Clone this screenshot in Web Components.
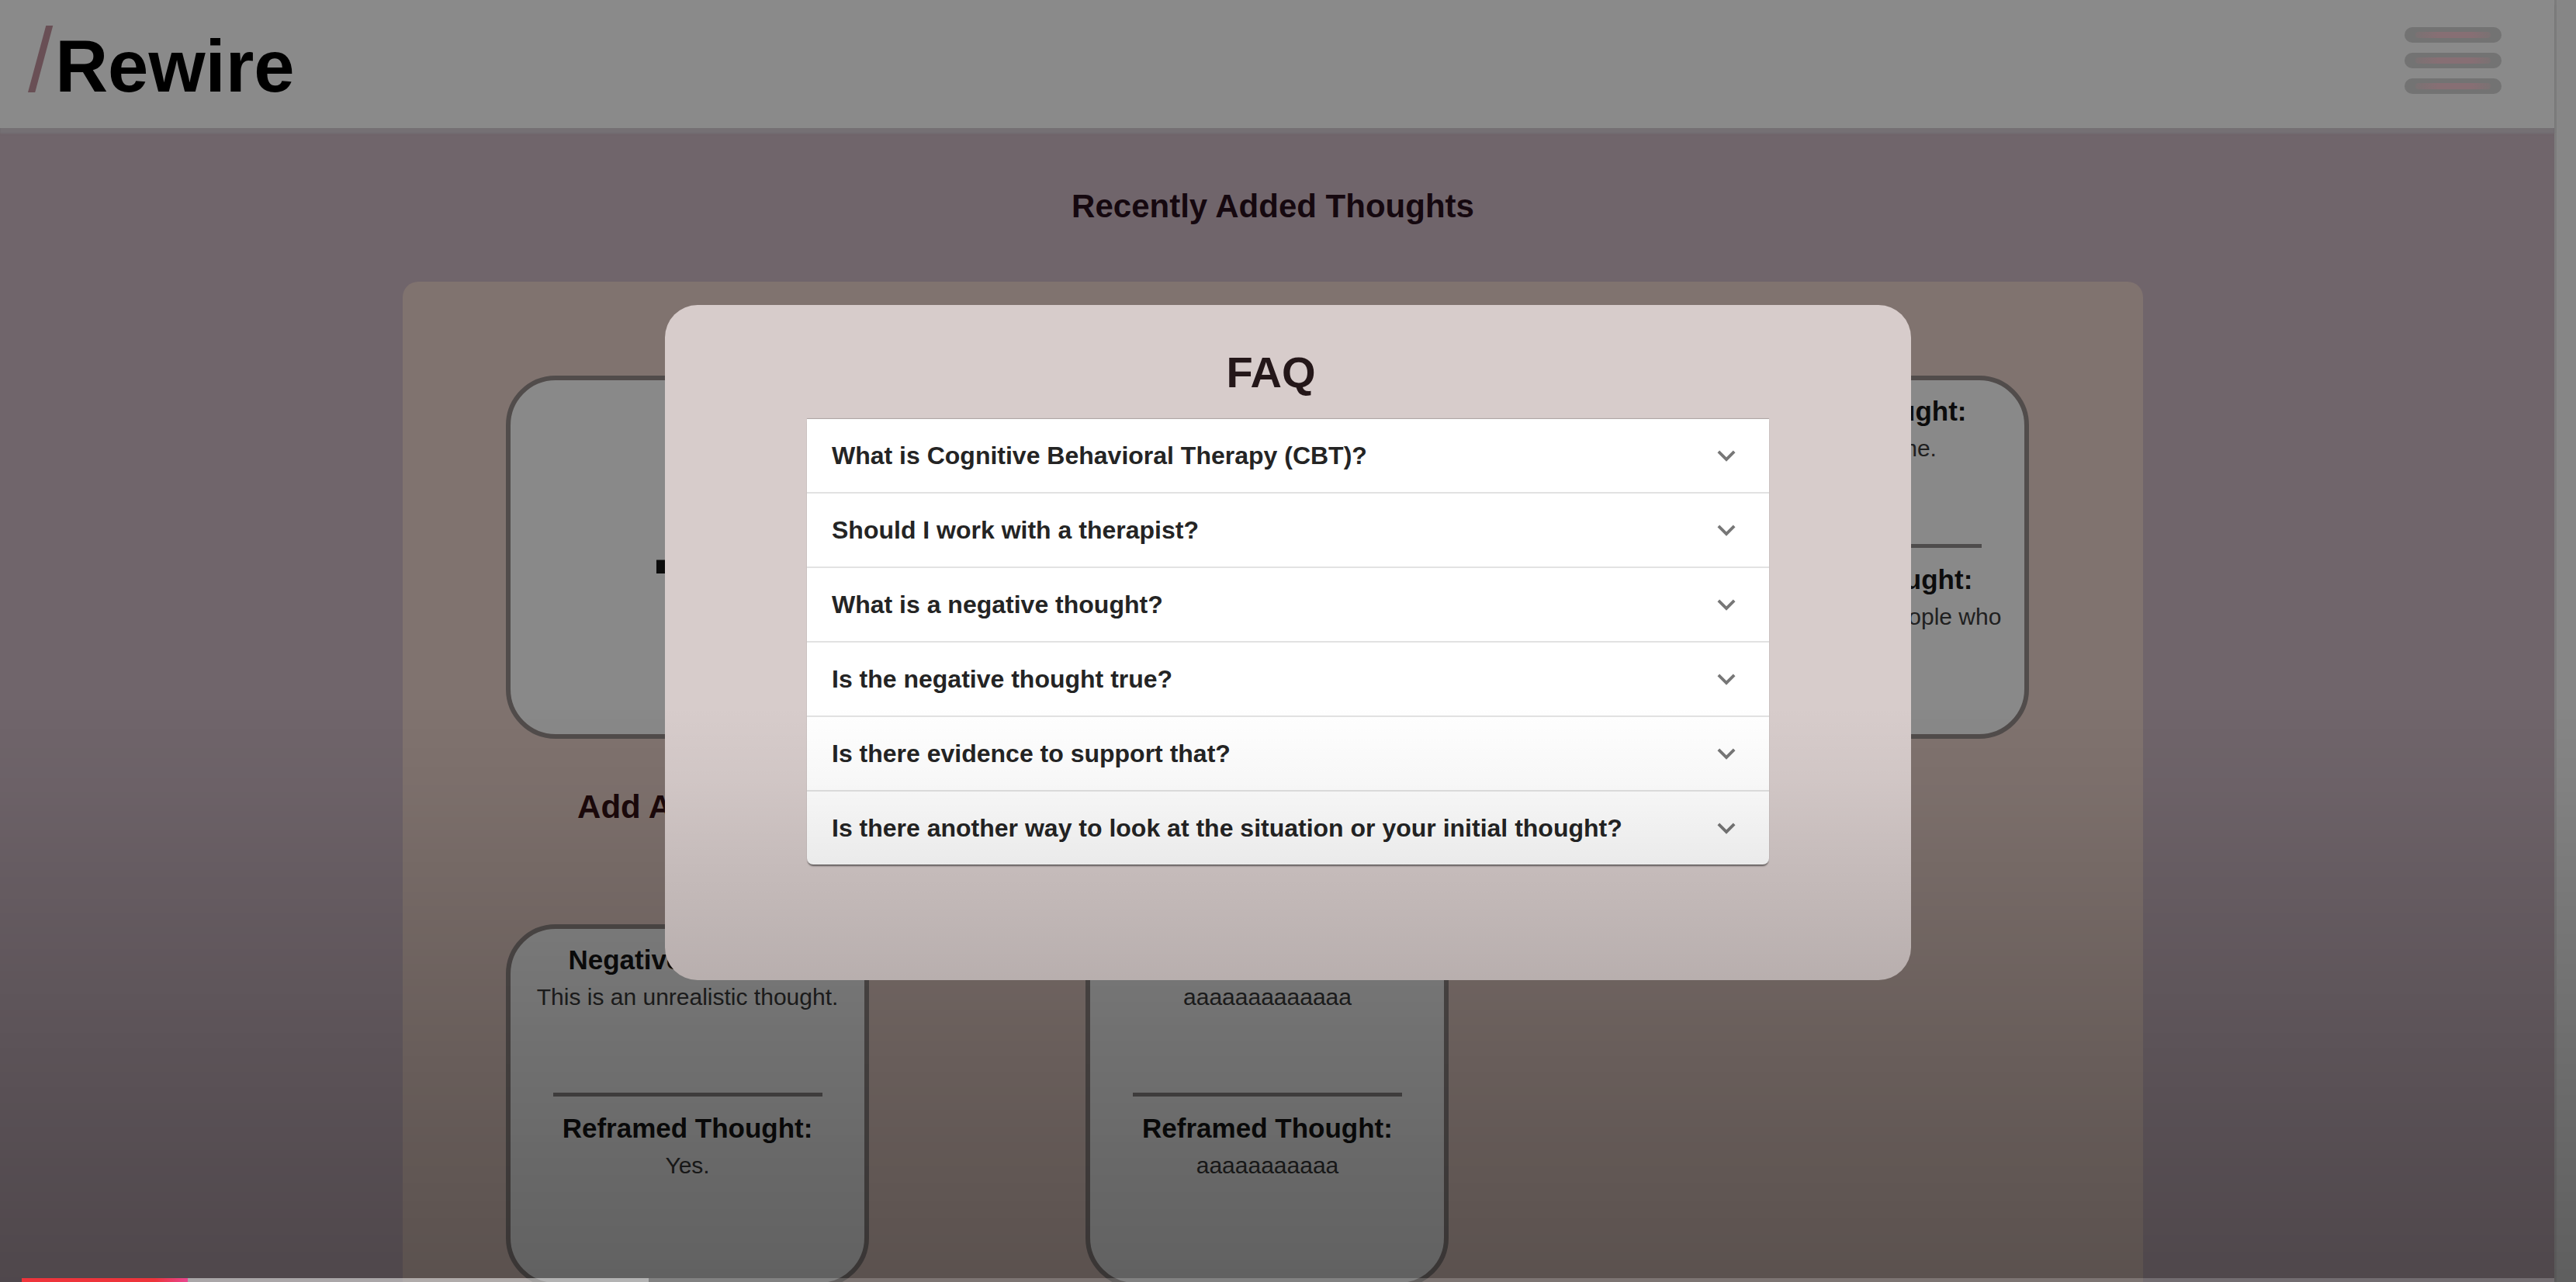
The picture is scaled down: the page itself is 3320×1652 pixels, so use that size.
<!DOCTYPE html>
<html lang="en">
<head>
<meta charset="utf-8">
<title>Rewire</title>
<style>
  html, body { margin: 0; height: 100%; overflow: hidden; background: #70656b; }
  body { font-family: "Liberation Sans", Arial, Helvetica, sans-serif; color: #0c0c0c; }
</style>
</head>
<body>
<rewire-app>
  <rewire-header></rewire-header>
  <thought-board>
    <add-card label="Add A Thought"></add-card>
    <thought-card style="grid-column: 3" negative="Nobody likes me." reframed="There are several people who love me."></thought-card>
    <thought-card negative="This is an unrealistic thought." reframed="Yes."></thought-card>
    <thought-card negative="aaaaaaaaaaaaa" reframed="aaaaaaaaaaa"></thought-card>
  </thought-board>
  <faq-modal slot="overlay">
    <faq-item>What is Cognitive Behavioral Therapy (CBT)?</faq-item>
    <faq-item>Should I work with a therapist?</faq-item>
    <faq-item>What is a negative thought?</faq-item>
    <faq-item>Is the negative thought true?</faq-item>
    <faq-item>Is there evidence to support that?</faq-item>
    <faq-item>Is there another way to look at the situation or your initial thought?</faq-item>
  </faq-modal>
  <playback-bar slot="overlay"></playback-bar>
</rewire-app>

<script>
function define(name, render) {
  customElements.define(name, class extends HTMLElement {
    constructor() {
      super();
      this.attachShadow({ mode: 'open' });
    }
    connectedCallback() {
      this.shadowRoot.innerHTML = render(this);
    }
  });
}

define('rewire-app', () => `
  <style>
    :host { display: flex; height: 100vh; overflow: hidden; }
    .page { flex: 1; min-width: 0; background: #70656b; }
    .track { flex: none; width: 28px; box-sizing: border-box; background: #868686; border-left: 3px solid #7c7c7c; }
  </style>
  <div class="page"><slot></slot></div>
  <div class="track"></div>
  <slot name="overlay"></slot>`);

define('rewire-header', () => `
  <style>
    :host { display: flex; align-items: center; justify-content: space-between; background: #8a8a8a;
            padding: 20px 68px 29px 36px; box-shadow: 0 7px 2px #757074; position: relative; }
    a { display: flex; align-items: baseline; gap: 3px; text-decoration: none; color: #000; font-size: 94px; line-height: 94px; font-weight: bold; }
    .slash { font-size: 116px; line-height: 116px; font-weight: normal; color: #694f55; }
    button { display: flex; flex-direction: column; gap: 13px; width: 125px; padding: 0; border: 0; background: none; }
    i { display: block; width: 100%; height: 20px; border-radius: 10px; background: #737373; padding: 6px 14px; box-sizing: border-box; }
    i::before { content: ""; display: block; height: 8px; border-radius: 4px;
                background: linear-gradient(90deg, #7a7273, #876f74 30%, #876f74 75%, #7a7273); }
  </style>
  <a href="#"><span class="slash">/</span><span>Rewire</span></a>
  <button type="button" aria-label="Menu"><i></i><i></i><i></i></button>`);

define('thought-board', () => `
  <style>
    :host { display: block; margin-right: 11px; padding-top: 80px; }
    h1 { margin: 0 0 76px; font-size: 42px; line-height: 42px; text-align: center; color: #15080f; }
    .panel { display: grid; grid-template-columns: repeat(3, 468px); justify-content: space-between; align-items: start;
             row-gap: 130px; width: 68.36%; box-sizing: border-box; margin: 0 auto;
             padding: 121px 147px 121px 133px; background: #80736f; border-radius: 20px; }
  </style>
  <h1>Recently Added Thoughts</h1>
  <div class="panel"><slot></slot></div>`);

define('add-card', el => `
  <style>
    :host { display: block; }
    button { display: block; width: 100%; height: 468px; padding: 22px 0 0; font: bold 160px/160px "Liberation Sans", Arial, sans-serif;
             color: #0c0c0c; background: #898989; border: 6px solid #514c4b; border-radius: 64px; }
    h2 { margin: 67px 0 0 92px; font-size: 42px; line-height: 42px; color: #1c090b; }
  </style>
  <button type="button" aria-label="${el.getAttribute('label')}">+</button>
  <h2>${el.getAttribute('label')}</h2>`);

define('thought-card', el => `
  <style>
    :host { display: flex; flex-direction: column; box-sizing: border-box; height: 468px; padding: 20px 24px;
            text-align: center; background: #898989; border: 6px solid #514c4b; border-radius: 64px; }
    section { flex: none; }
    .negative { min-height: 191px; }
    h3 { margin: 0 0 8px; font-size: 35px; line-height: 40px; }
    p { margin: 0; font-size: 30px; line-height: 40px; color: #202020; }
    hr { flex: none; width: 347px; height: 5px; margin: 0 auto 21px; border: 0; background: #4e4c4c; }
  </style>
  <section class="negative"><h3>Negative Thought:</h3><p>${el.getAttribute('negative')}</p></section>
  <hr>
  <section><h3>Reframed Thought:</h3><p>${el.getAttribute('reframed')}</p></section>`);

define('faq-modal', () => `
  <style>
    :host { position: fixed; inset: 0; display: flex; align-items: center; justify-content: center; padding-top: 4px; }
    .modal { width: 1606px; max-width: 100%; box-sizing: border-box; padding: 59px 183px 149px; background: #d7cccb; border-radius: 42px; }
    h2 { margin: 0 0 32px; padding-right: 44px; font-size: 56px; line-height: 56px; text-align: center; color: #241719; }
    .list { background: #fff; border-radius: 0 0 8px 8px; box-shadow: 0 3px 2px -1px rgba(0,0,0,.5), 0 -1px 1px rgba(0,0,0,.2); }
  </style>
  <div class="modal" role="dialog" aria-label="FAQ">
    <h2>FAQ</h2>
    <div class="list"><slot></slot></div>
  </div>`);

define('faq-item', () => `
  <style>
    :host { display: block; border-bottom: 2px solid #e2e2e2; }
    :host(:last-of-type) { border-bottom: 0; }
    button { display: flex; align-items: center; justify-content: space-between; width: 100%; padding: 24px 32px; border: 0;
             background: none; text-align: left; color: #242424; font: bold 32px/46px "Liberation Sans", Arial, sans-serif; }
    svg { flex: none; width: 46px; height: 46px; fill: #777; }
  </style>
  <button type="button" aria-expanded="false">
    <span><slot></slot></span>
    <svg viewBox="0 0 24 24" aria-hidden="true"><path d="M16.59 8.59 12 13.17 7.41 8.59 6 10l6 6 6-6z"/></svg>
  </button>`);

define('playback-bar', () => `
  <style>
    :host { position: fixed; inset: 0; display: flex; flex-direction: column; justify-content: flex-end; pointer-events: none;
            background: linear-gradient(180deg, rgba(0,0,0,0) 55%, rgba(0,0,0,.03) 61%, rgba(0,0,0,.08) 67%,
              rgba(0,0,0,.14) 76%, rgba(0,0,0,.23) 90%, rgba(0,0,0,.29) 100%); }
    .track { display: flex; height: 5px; margin: 0 28px; background: rgba(255,255,255,.2); }
    .played { width: 214px; background: linear-gradient(90deg, #ee343b 80%, #e8468f); }
    .loaded { width: 594px; background: rgba(255,255,255,.4); }
  </style>
  <div class="track"><div class="played"></div><div class="loaded"></div></div>`);
</script>
</body>
</html>
